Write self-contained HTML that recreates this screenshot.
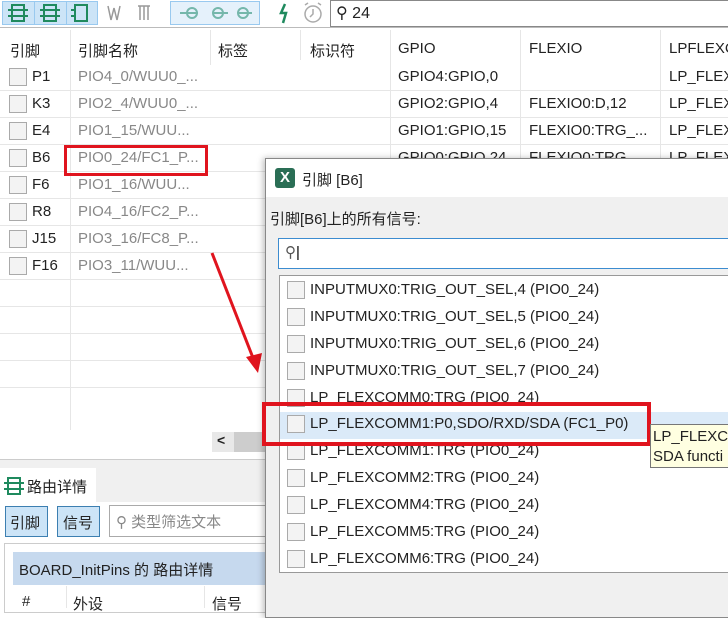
<!DOCTYPE html><html><head><meta charset="utf-8"><style>
*{margin:0;padding:0;box-sizing:border-box}
body{width:728px;height:608px;overflow:hidden;position:relative;background:#fff;font-family:"Liberation Sans","Noto Sans CJK SC",sans-serif;font-size:15px;color:#222}
.a{position:absolute;white-space:nowrap}
.cb{position:absolute;width:18px;height:18px;border:1px solid #aaa;background:#f3f3f3}
.hl{position:absolute;height:1px;background:#e6e6e6}
.vl{position:absolute;width:1px;background:#e6e6e6}
.g{color:#888}
</style></head><body>
<!-- toolbar -->
<div class="a" style="left:2px;top:1px;width:96px;height:24px;background:#cce4f7;border:1px solid #99c9ef"></div>
<div class="a" style="left:34px;top:1px;width:1px;height:24px;background:#99c9ef"></div>
<div class="a" style="left:66px;top:1px;width:1px;height:24px;background:#99c9ef"></div>
<svg class="a" style="left:0;top:0" width="330" height="27" fill="none" stroke-width="2">
<g stroke="#1f8a5e"><rect x="12" y="5" width="12" height="16"/><line x1="8" y1="10" x2="28" y2="10"/><line x1="8" y1="16" x2="28" y2="16"/>
<rect x="44" y="5" width="12" height="16"/><line x1="40" y1="10" x2="60" y2="10"/><line x1="40" y1="16" x2="60" y2="16"/>
<rect x="75" y="5" width="12" height="16"/><line x1="71" y1="10" x2="75" y2="10"/><line x1="71" y1="16" x2="75" y2="16"/></g>
<g stroke="#999" stroke-width="1.5"><path d="M108 6 l3 14 l3 -12 l3 12 l3 -14"/><path d="M138 6 h12 M140 6 v14 M144 6 v14 M148 6 v14"/></g>
<g stroke="#1f8a5e"><circle cx="192" cy="13" r="5"/><line x1="180" y1="13" x2="198" y2="13"/><circle cx="218" cy="13" r="5"/><line x1="213" y1="13" x2="228" y2="13"/><circle cx="243" cy="13" r="5"/><line x1="238" y1="13" x2="252" y2="13"/></g>
<path d="M285 4 l-4 9 h5 l-3 10" stroke="#1f8a5e" stroke-width="2.5"/>
<g stroke="#aaa" stroke-width="1.5"><circle cx="313" cy="14" r="8"/><path d="M313 9 v5 l-3 3 M305 5 l3 -2 M321 5 l-3 -2"/></g>
</svg>
<div class="a" style="left:170px;top:1px;width:90px;height:24px;border:1px solid #99c9ef;background:rgba(204,228,247,.5)"></div>
<div class="a" style="left:330px;top:0;width:400px;height:27px;border:1px solid #888;border-right:none;background:#fff"></div>
<div class="a" style="left:336px;top:3px;font-size:16px">⚲ 24</div>
<!-- header -->
<div class="a" style="left:0;top:27px;width:728px;height:1px;background:#bbb"></div>
<div class="a" style="left:10px;top:40px">引脚</div>
<div class="a" style="left:78px;top:40px">引脚名称</div>
<div class="a" style="left:218px;top:40px">标签</div>
<div class="a" style="left:310px;top:40px">标识符</div>
<div class="a" style="left:398px;top:40px">GPIO</div>
<div class="a" style="left:529px;top:40px">FLEXIO</div>
<div class="a" style="left:669px;top:40px">LPFLEXC</div>
<div class="vl" style="left:70px;top:30px;height:400px"></div>
<div class="vl" style="left:210px;top:30px;height:35px"></div>
<div class="vl" style="left:300px;top:30px;height:30px"></div>
<div class="vl" style="left:390px;top:30px;height:130px"></div>
<div class="vl" style="left:520px;top:30px;height:130px"></div>
<div class="vl" style="left:660px;top:30px;height:130px"></div>
<!-- rows -->
<div class="hl" style="left:0;top:90px;width:728px"></div>
<div class="hl" style="left:0;top:117px;width:728px"></div>
<div class="hl" style="left:0;top:144px;width:728px"></div>
<div class="hl" style="left:0;top:171px;width:265px"></div>
<div class="hl" style="left:0;top:198px;width:265px"></div>
<div class="hl" style="left:0;top:225px;width:265px"></div>
<div class="hl" style="left:0;top:252px;width:265px"></div>
<div class="hl" style="left:0;top:279px;width:265px"></div>
<div class="hl" style="left:0;top:306px;width:265px"></div>
<div class="hl" style="left:0;top:333px;width:265px"></div>
<div class="hl" style="left:0;top:360px;width:265px"></div>
<div class="hl" style="left:0;top:387px;width:265px"></div>
<div class="cb" style="left:9px;top:68px"></div><div class="a" style="left:32px;top:68px">P1</div><div class="a g" style="left:78px;top:68px">PIO4_0/WUU0_...</div><div class="a" style="left:398px;top:68px">GPIO4:GPIO,0</div><div class="a" style="left:669px;top:68px">LP_FLEX</div>
<div class="cb" style="left:9px;top:95px"></div><div class="a" style="left:32px;top:95px">K3</div><div class="a g" style="left:78px;top:95px">PIO2_4/WUU0_...</div><div class="a" style="left:398px;top:95px">GPIO2:GPIO,4</div><div class="a" style="left:529px;top:95px">FLEXIO0:D,12</div><div class="a" style="left:669px;top:95px">LP_FLEX</div>
<div class="cb" style="left:9px;top:122px"></div><div class="a" style="left:32px;top:122px">E4</div><div class="a g" style="left:78px;top:122px">PIO1_15/WUU...</div><div class="a" style="left:398px;top:122px">GPIO1:GPIO,15</div><div class="a" style="left:529px;top:122px">FLEXIO0:TRG_...</div><div class="a" style="left:669px;top:122px">LP_FLEX</div>
<div class="cb" style="left:9px;top:149px"></div><div class="a" style="left:32px;top:149px">B6</div><div class="a g" style="left:78px;top:149px">PIO0_24/FC1_P...</div><div class="a" style="left:398px;top:149px">GPIO0:GPIO,24</div><div class="a" style="left:529px;top:149px">FLEXIO0:TRG</div><div class="a" style="left:669px;top:149px">LP_FLEX</div>
<div class="cb" style="left:9px;top:176px"></div><div class="a" style="left:32px;top:176px">F6</div><div class="a g" style="left:78px;top:176px">PIO1_16/WUU...</div>
<div class="cb" style="left:9px;top:203px"></div><div class="a" style="left:32px;top:203px">R8</div><div class="a g" style="left:78px;top:203px">PIO4_16/FC2_P...</div>
<div class="cb" style="left:9px;top:230px"></div><div class="a" style="left:32px;top:230px">J15</div><div class="a g" style="left:78px;top:230px">PIO3_16/FC8_P...</div>
<div class="cb" style="left:9px;top:257px"></div><div class="a" style="left:32px;top:257px">F16</div><div class="a g" style="left:78px;top:257px">PIO3_11/WUU...</div>
<div class="a" style="left:64px;top:145px;width:144px;height:31px;border:3px solid #e0141e"></div>
<!-- arrow -->
<svg class="a" style="left:200px;top:245px" width="70" height="135"><line x1="12" y1="8" x2="55" y2="118" stroke="#e0141e" stroke-width="3"/><polygon points="58,128 46,112 62,108" fill="#e0141e"/></svg>
<!-- scrollbar -->
<div class="a" style="left:212px;top:432px;width:53px;height:20px;background:#e8e8e8"></div>
<div class="a" style="left:234px;top:432px;width:31px;height:20px;background:#cdcdcd"></div>
<div class="a" style="left:217px;top:432px;font-size:14px;font-weight:bold">&lt;</div>
<!-- bottom panel -->
<div class="a" style="left:0;top:459px;width:265px;height:149px;background:#f0f0f0;border-top:1px solid #ccc"></div>
<div class="a" style="left:0;top:468px;width:96px;height:34px;background:#fff"></div>
<svg class="a" style="left:3px;top:476px" width="22" height="20" fill="none" stroke="#1f8a5e" stroke-width="2"><rect x="5" y="2" width="12" height="16"/><line x1="1" y1="7" x2="21" y2="7"/><line x1="1" y1="13" x2="21" y2="13"/></svg>
<div class="a" style="left:27px;top:476px">路由详情</div>
<div class="a" style="left:0;top:502px;width:265px;height:106px;background:#fff"></div>
<div class="a" style="left:5px;top:506px;width:43px;height:31px;background:#cce4f7;border:1px solid #3c7fb1;padding:5px 4px">引脚</div>
<div class="a" style="left:57px;top:506px;width:43px;height:31px;background:#cce4f7;border:1px solid #3c7fb1;padding:5px 5px">信号</div>
<div class="a" style="left:109px;top:505px;width:160px;height:32px;border:1px solid #aaa;background:#fff;color:#888;padding:5px 6px">⚲ 类型筛选文本</div>
<div class="a" style="left:4px;top:543px;width:265px;height:70px;border:1px solid #ccc;background:#fff"></div>
<div class="a" style="left:13px;top:552px;width:255px;height:33px;background:#c6d9ee;padding:7px 6px">BOARD_InitPins 的 路由详情</div>
<div class="a" style="left:22px;top:593px">#</div>
<div class="a" style="left:73px;top:593px">外设</div>
<div class="a" style="left:212px;top:593px">信号</div>
<div class="vl" style="left:66px;top:586px;height:22px"></div>
<div class="vl" style="left:204px;top:586px;height:22px"></div>
<!-- dialog -->
<div class="a" style="left:265px;top:158px;width:470px;height:460px;background:#f0f0f0;border:1px solid #888;box-shadow:-2px 0 6px rgba(0,0,0,.25)"></div>
<div class="a" style="left:266px;top:159px;width:470px;height:38px;background:#fff"></div>
<div class="a" style="left:275px;top:168px;width:20px;height:20px;background:#2a6e55;border-radius:3px;color:#fff;font-size:15px;font-weight:bold;text-align:center;line-height:20px">X</div>
<div class="a" style="left:302px;top:169px">引脚 [B6]</div>
<div class="a" style="left:270px;top:208px">引脚[B6]上的所有信号:</div>
<div class="a" style="left:278px;top:238px;width:460px;height:31px;border:1px solid #3c8cd0;background:#fff"></div>
<div class="a" style="left:285px;top:243px;font-size:15px;color:#555">⚲<span style="color:#000">|</span></div>
<div class="a" style="left:279px;top:275px;width:460px;height:298px;border:1px solid #999;background:#fff"></div>
<div class="a" style="left:280px;top:412px;width:450px;height:27px;background:#dbeaf8"></div>
<div class="cb" style="left:287px;top:281px"></div><div class="a" style="left:310px;top:281px">INPUTMUX0:TRIG_OUT_SEL,4 (PIO0_24)</div>
<div class="cb" style="left:287px;top:308px"></div><div class="a" style="left:310px;top:308px">INPUTMUX0:TRIG_OUT_SEL,5 (PIO0_24)</div>
<div class="cb" style="left:287px;top:335px"></div><div class="a" style="left:310px;top:335px">INPUTMUX0:TRIG_OUT_SEL,6 (PIO0_24)</div>
<div class="cb" style="left:287px;top:362px"></div><div class="a" style="left:310px;top:362px">INPUTMUX0:TRIG_OUT_SEL,7 (PIO0_24)</div>
<div class="cb" style="left:287px;top:389px"></div><div class="a" style="left:310px;top:389px">LP_FLEXCOMM0:TRG (PIO0_24)</div>
<div class="cb" style="left:287px;top:415px"></div><div class="a" style="left:310px;top:415px">LP_FLEXCOMM1:P0,SDO/RXD/SDA (FC1_P0)</div>
<div class="cb" style="left:287px;top:442px"></div><div class="a" style="left:310px;top:442px">LP_FLEXCOMM1:TRG (PIO0_24)</div>
<div class="cb" style="left:287px;top:469px"></div><div class="a" style="left:310px;top:469px">LP_FLEXCOMM2:TRG (PIO0_24)</div>
<div class="cb" style="left:287px;top:496px"></div><div class="a" style="left:310px;top:496px">LP_FLEXCOMM4:TRG (PIO0_24)</div>
<div class="cb" style="left:287px;top:523px"></div><div class="a" style="left:310px;top:523px">LP_FLEXCOMM5:TRG (PIO0_24)</div>
<div class="cb" style="left:287px;top:550px"></div><div class="a" style="left:310px;top:550px">LP_FLEXCOMM6:TRG (PIO0_24)</div>
<div class="a" style="left:262px;top:402px;width:389px;height:44px;border:4px solid #e0141e"></div>
<div class="a" style="left:650px;top:424px;width:80px;height:44px;background:#ffffe1;border:1px solid #777;padding:2px 2px;line-height:20px;font-size:15px">LP_FLEXCO<br>SDA functi</div>
</body></html>
